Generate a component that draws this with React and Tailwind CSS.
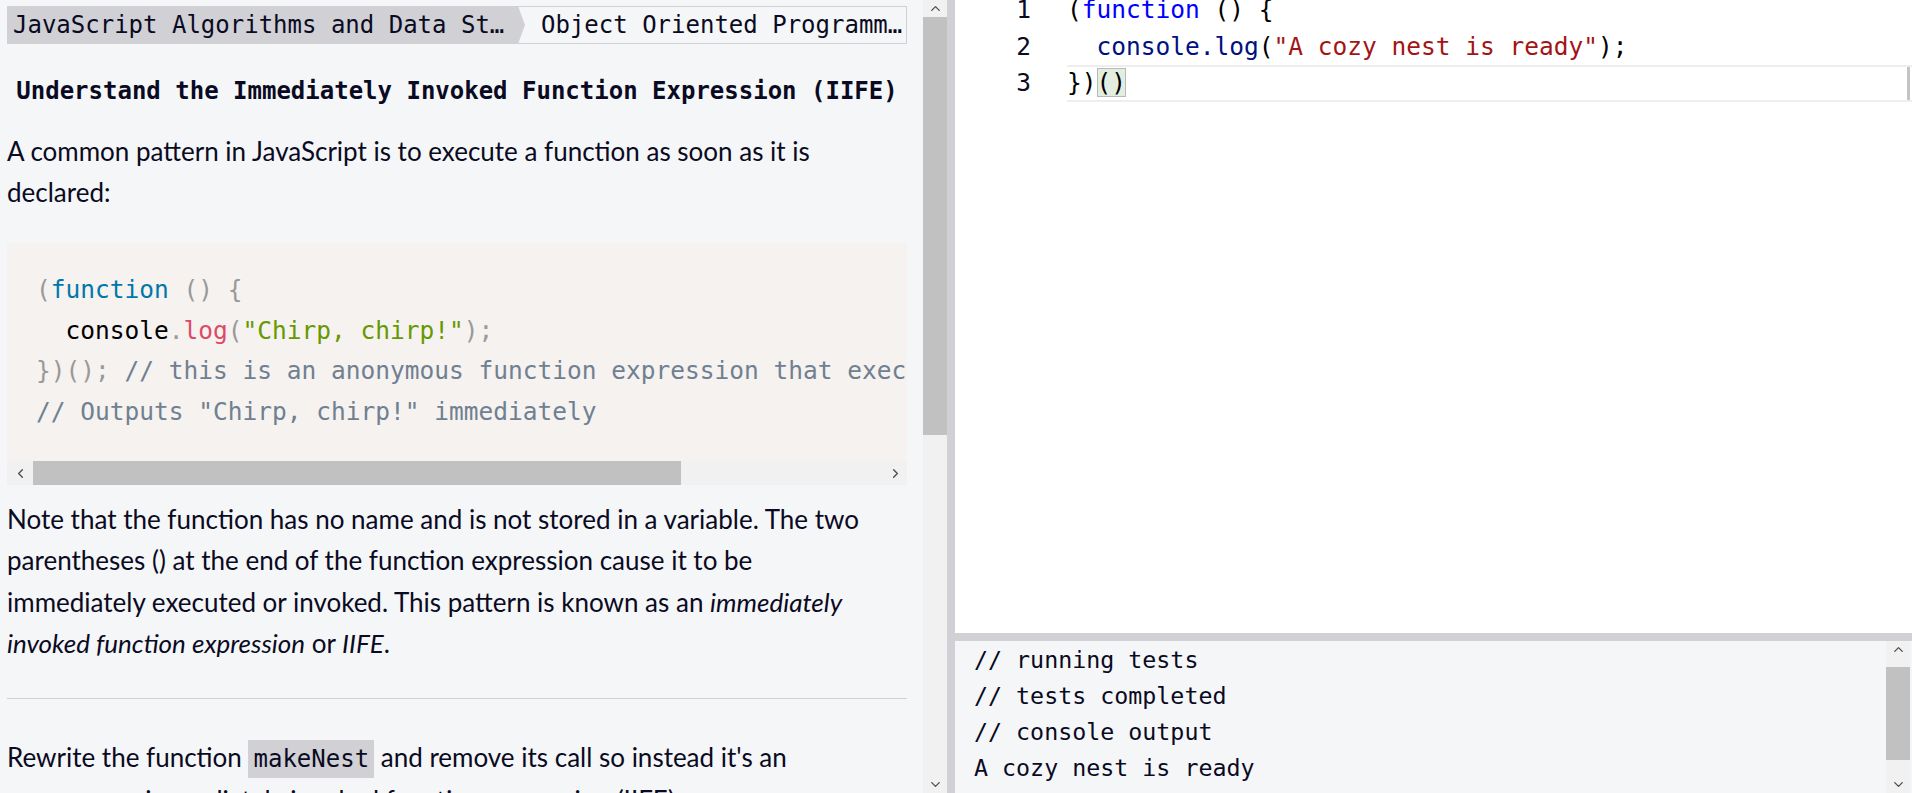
import { ChevronUp, ChevronDown, ChevronLeft, ChevronRight } from 'lucide-react'

const mono = "font-['DejaVu_Sans_Mono',monospace]"
const body = "font-['Lato',sans-serif] text-[26px]"

function VScrollbar({ height, thumbTop, thumbHeight }) {
  return (
    <div className={`flex w-[24px] shrink-0 flex-col bg-[#f1f1f1] ${height}`}>
      <div className="flex h-[17px] shrink-0 items-center justify-center text-[#505050]">
        <ChevronUp size={15} strokeWidth={2.2} />
      </div>
      <div className={thumbTop} />
      <div className={`w-full shrink-0 bg-[#c1c1c1] ${thumbHeight}`} />
      <div className="flex-1" />
      <div className="flex h-[17px] shrink-0 items-center justify-center text-[#505050]">
        <ChevronDown size={15} strokeWidth={2.2} />
      </div>
    </div>
  )
}

function Lesson() {
  return (
    <div className="flex w-[923px] shrink-0 flex-col overflow-hidden bg-[#f5f6f7] pl-[7px] pr-[16px] text-[#0a0a23]">
      {/* Breadcrumb */}
      <div className={`mt-[6px] flex h-[38px] shrink-0 ${mono} text-[24px] leading-[38px]`}>
        <div className="flex w-[518px] shrink-0 bg-[#d0d0d5] pl-[6px] [clip-path:polygon(0_0,511px_0,100%_50%,511px_100%,0_100%)]">
          <span className="whitespace-nowrap">JavaScript Algorithms and Data St…</span>
        </div>
        <div className="-ml-[7px] flex-1 border border-l-0 border-[#d0d0d5] pl-[23px] leading-[36px]">
          <span className="whitespace-nowrap">Object Oriented Programm…</span>
        </div>
      </div>

      <h2 className={`mt-[29px] text-center ${mono} text-[24px] font-bold leading-[36px]`}>
        Understand the Immediately Invoked Function Expression (IIFE)
      </h2>

      <p className={`mt-[22px] w-[870px] ${body} leading-[41px]`}>
        A common pattern in JavaScript is to execute a function as soon as it is declared:
      </p>

      {/* Code sample */}
      <div className="mt-[30px] shrink-0 bg-[#f5f2f0]">
        <pre className={`overflow-hidden whitespace-pre px-[29px] pt-[27px] pb-[29px] ${mono} text-[24.5px] leading-[40.5px] text-black`}>
          <div>
            <span className="text-[#999]">(</span>
            <span className="text-[#07a]">function</span>
            <span className="text-[#999]"> () {'{'}</span>
          </div>
          <div>
            {'  '}console<span className="text-[#999]">.</span>
            <span className="text-[#dd4a68]">log</span>
            <span className="text-[#999]">(</span>
            <span className="text-[#690]">"Chirp, chirp!"</span>
            <span className="text-[#999]">);</span>
          </div>
          <div>
            <span className="text-[#999]">{'})();'}</span>
            <span className="text-[#708090]"> // this is an anonymous function expression that executes right away</span>
          </div>
          <div className="text-[#708090]">// Outputs "Chirp, chirp!" immediately</div>
        </pre>
        <div className="flex h-[24px] bg-[#f1f1f1]">
          <div className="flex w-[26px] items-center justify-center text-[#505050]">
            <ChevronLeft size={15} strokeWidth={2.2} />
          </div>
          <div className="w-[648px] bg-[#c1c1c1]" />
          <div className="flex-1" />
          <div className="flex w-[24px] items-center justify-center text-[#505050]">
            <ChevronRight size={15} strokeWidth={2.2} />
          </div>
        </div>
      </div>

      <p className={`mt-[14px] w-[870px] ${body} leading-[41.3px]`}>
        Note that the function has no name and is not stored in a variable. The two parentheses () at
        the end of the function expression cause it to be immediately executed or invoked. This
        pattern is known as an <em>immediately invoked function expression</em> or <em>IIFE</em>.
      </p>

      <hr className="mt-[34px] border-t border-[#d0d0d5]" />

      <p className={`mt-[38px] w-[870px] ${body} leading-[41px]`}>
        Rewrite the function{' '}
        <code className={`bg-[#d0d0d5] px-[5px] py-[5px] ${mono} text-[24px]`}>makeNest</code> and
        remove its call so instead it's an anonymous immediately invoked function expression (IIFE).
      </p>
    </div>
  )
}

function Editor() {
  return (
    <div className={`flex h-[633px] shrink-0 overflow-hidden bg-white ${mono} text-[24.5px] leading-[36.5px]`}>
      <div className="-mt-[8px] w-[76px] shrink-0 text-right text-[#0a0a23]">
        <div>1</div>
        <div>2</div>
        <div>3</div>
      </div>
      <div className="-mt-[8px] ml-[36px] flex-1 whitespace-pre text-black">
        <div className="h-[36.5px]">
          <span>(</span>
          <span className="text-[#0000ff]">function</span>
          <span> () {'{'}</span>
        </div>
        <div className="h-[36.5px]">
          {'  '}
          <span className="text-[#001080]">console.log</span>
          <span>(</span>
          <span className="text-[#a31515]">"A cozy nest is ready"</span>
          <span>);</span>
        </div>
        <div className="flex h-[36.5px] border-y-2 border-[#eeeeee] leading-[32.5px]">
          <div className="flex-1">
            <span>{'})'}</span>
            <span className="bg-[#e4eee0] outline outline-1 -outline-offset-1 outline-[#b9b9b9]">()</span>
          </div>
          <div className="mr-[2px] w-[3px] bg-[#c4c4c4]" />
        </div>
      </div>
    </div>
  )
}

function Console() {
  return (
    <div className="flex h-[152px] shrink-0 bg-[#f5f6f7]">
      <div className={`flex-1 overflow-hidden whitespace-pre pl-[19px] pt-[1px] ${mono} text-[23.3px] leading-[36px] text-[#0a0a23]`}>
        <div>// running tests</div>
        <div>// tests completed</div>
        <div>// console output</div>
        <div>A cozy nest is ready</div>
      </div>
      <div className="mr-[2px]">
        <VScrollbar height="h-[152px]" thumbTop="h-[9px] shrink-0" thumbHeight="h-[93px]" />
      </div>
    </div>
  )
}

export default function App() {
  return (
    <div className="flex h-[793px] w-[1912px] overflow-hidden bg-[#f5f6f7]">
      <Lesson />
      <VScrollbar height="h-[793px]" thumbTop="h-0" thumbHeight="h-[418px]" />
      <div className="w-[8px] shrink-0 bg-[#d0d0d5]" />
      <div className="flex min-w-0 flex-1 flex-col">
        <Editor />
        <div className="h-[8px] shrink-0 bg-[#d0d0d5]" />
        <Console />
      </div>
    </div>
  )
}
